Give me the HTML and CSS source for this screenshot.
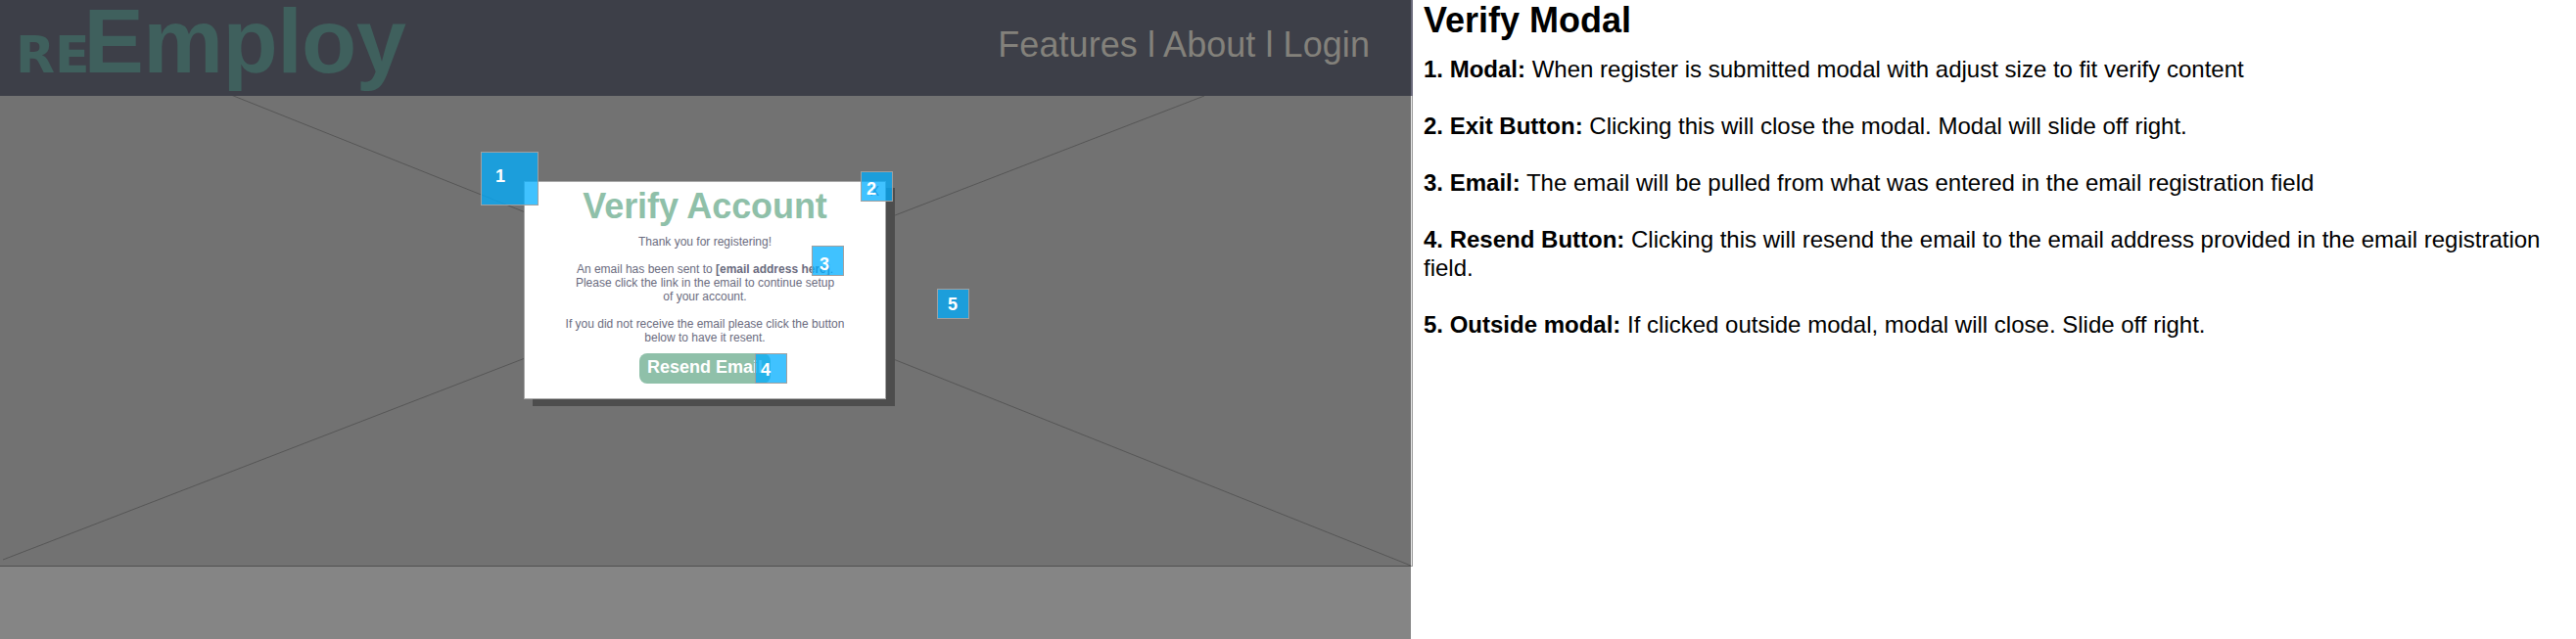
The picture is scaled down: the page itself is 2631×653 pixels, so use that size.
FILE: index.html
```html
<!DOCTYPE html>
<html lang="en">
<head>
<meta charset="utf-8">
<title>Verify Modal</title>
<link rel="stylesheet" href="styles.css">
</head>
<body>
<div class="page">
  <section class="wireframe">
    <header class="topbar">
      <div class="logo"><span class="logo-re">RE</span><span class="logo-main">Employ</span></div>
      <nav class="nav">Features l About l Login</nav>
    </header>
    <main class="hero">
      <svg class="cross" width="1441" height="480" viewBox="0 98 1441 480">
        <path d="M236 97L1441 578M3 572L1230 98"/>
      </svg>
      <div class="modal">
        <span class="close">X</span>
        <h2 class="modal-title">Verify Account</h2>
        <p class="copy">Thank you for registering!</p>
        <p class="copy">An email has been sent to <b>[email address here]</b>.<br>Please click the link in the email to continue setup<br>of your account.</p>
        <p class="copy">If you did not receive the email please click the button<br>below to have it resent.</p>
        <div class="resend">Resend Email</div>
      </div>
    </main>
    <span class="pin pin-1">1</span>
    <span class="pin pin-2">2</span>
    <span class="pin pin-3">3</span>
    <span class="pin pin-4">4</span>
    <span class="pin pin-5">5</span>
  </section>
  <div class="edge"><div class="edge-top"></div><div class="edge-body"></div></div>
  <section class="notes">
    <h1 class="notes-title">Verify Modal</h1>
    <p class="note"><b>1. Modal:</b> When register is submitted modal with adjust size to fit verify content</p>
    <p class="note"><b>2. Exit Button:</b> Clicking this will close the modal. Modal will slide off right.</p>
    <p class="note"><b>3. Email:</b> The email will be pulled from what was entered in the email registration field</p>
    <p class="note"><b>4. Resend Button:</b> Clicking this will resend the email to the email address provided in the email registration<br>field.</p>
    <p class="note"><b>5. Outside modal:</b> If clicked outside modal, modal will close. Slide off right.</p>
  </section>
</div>
</body>
</html>
```
FILE: styles.css
```css
* { box-sizing: border-box; }
body { margin: 0; background: #fff; font-family: "Liberation Sans", Arial, sans-serif; }
h1, h2, p { margin: 0; }
.page { display: flex; height: 653px; overflow: hidden; }

.wireframe { position: relative; width: 1441px; background: #858585; white-space: nowrap; }
.topbar { display: flex; justify-content: space-between; height: 98px; padding: 0 42px 0 16px; background: #3d3f48; }
.logo { color: #3f605d; font-weight: 700; line-height: 98px; height: 98px; margin-top: -7px; }
.logo-re { font-family: "DejaVu Sans", Verdana, sans-serif; font-size: 52px; }
.logo-main { font-size: 92px; letter-spacing: -.6px; margin-left: -6px; }
.nav { color: #83817b; font-size: 36px; line-height: 40px; letter-spacing: .06px; padding-top: 26px; }

.hero { position: relative; height: 481px; background: #727272; border-bottom: 1px solid #505050; }
.cross { display: block; fill: none; stroke: #565656; stroke-width: 1; }

.modal { position: absolute; left: 535px; top: 87px; width: 370px; height: 223px; border: 1px solid #a9a9a9; background: #fff; box-shadow: 9px 7px 0 #4d4d4d; text-align: center; color: #6a6b7e; }
.close { position: absolute; right: 6px; top: 1px; font-size: 14px; line-height: 16px; }
.modal-title { color: #8fc0a9; font-size: 36px; line-height: 40px; letter-spacing: -.1px; padding-top: 5px; margin-bottom: 9px; }
.copy { font-size: 12px; line-height: 14px; margin-bottom: 14px; }
.resend { width: 134px; height: 31px; margin: -5px auto 0; border-radius: 8px; background: #8fc0a9; color: #fff; font-size: 18px; font-weight: 700; line-height: 28px; }

.pin { position: absolute; width: 33px; height: 31px; border: 1px solid #a0a0a0; background: rgba(0, 174, 255, .75); background-clip: padding-box; color: #fff; font-size: 18px; font-weight: 700; line-height: 20px; }
.pin-1 { left: 491px; top: 155px; width: 59px; height: 55px; padding: 14px 0 0 14px; }
.pin-2 { left: 879px; top: 175px; padding: 7px 0 0 5px; }
.pin-3 { left: 829px; top: 251px; padding: 8px 0 0 7px; }
.pin-4 { left: 771px; top: 361px; padding: 6px 0 0 5px; }
.pin-5 { left: 957px; top: 295px; padding: 5px 0 0 10px; }

.edge { width: 2px; }
.edge-top { height: 98px; background: #6a6a7b; }
.edge-body { height: 481px; border-right: 1px solid #999; border-bottom: 1px solid #999; background: #e8e8e8; }

.notes { padding: 1px 0 0 11px; color: #000; white-space: nowrap; }
.notes-title { font-size: 36px; line-height: 40px; margin-bottom: 15px; }
.note { font-size: 24px; line-height: 29px; margin-bottom: 29px; }
```
